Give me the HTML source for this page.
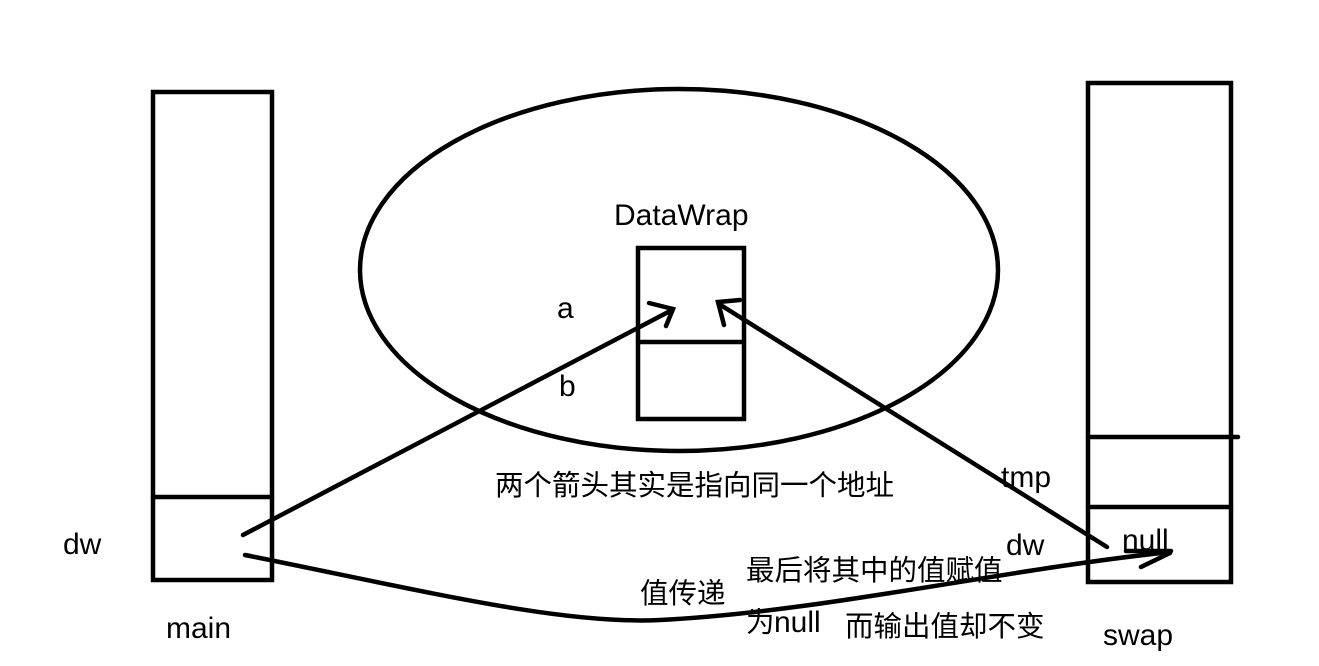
<!DOCTYPE html>
<html><head><meta charset="utf-8"><style>
html,body{margin:0;padding:0;background:#fff;width:1319px;height:666px;overflow:hidden}
svg{display:block}
text{font-family:"Liberation Sans","Noto Sans CJK SC",sans-serif;font-size:30px;fill:#000}
text.c{font-size:28.5px}
</style></head><body>
<svg width="1319" height="666" viewBox="0 0 1319 666">
<g fill="none" stroke="#000" stroke-width="4.5" stroke-linecap="round">
<rect x="153" y="92" width="119" height="488"/>
<line x1="153" y1="497" x2="272" y2="497"/>
<rect x="1088" y="83" width="143" height="499"/>
<line x1="1088" y1="437" x2="1238" y2="437"/>
<line x1="1088" y1="507" x2="1231" y2="507"/>
<ellipse cx="679" cy="270" rx="319" ry="181"/>
<rect x="638" y="248" width="106" height="171"/>
<line x1="638" y1="342" x2="744" y2="342"/>
<line x1="243" y1="535" x2="672" y2="310"/>
<polyline points="649,303 673,309 666,326"/>
<line x1="1107" y1="547" x2="719" y2="304"/>
<polyline points="740,300 718,302 724,325"/>
<path d="M245,555 C420,590 560,625 660,620 C820,612 1000,570 1170,552"/>
<line x1="1126" y1="551" x2="1171" y2="551"/>
<line x1="1141" y1="567" x2="1170" y2="553"/>
</g>
<text x="614" y="225">DataWrap</text>
<text x="557" y="318">a</text>
<text x="559" y="396">b</text>
<text class="c" x="495" y="495">两个箭头其实是指向同一个地址</text>
<text x="63" y="554">dw</text>
<text x="166" y="638">main</text>
<text x="1001" y="487">tmp</text>
<text x="1006" y="555">dw</text>
<text x="1122" y="550">null</text>
<text x="1103" y="645">swap</text>
<text class="c" x="640" y="603">值传递</text>
<text class="c" x="746" y="580">最后将其中的值赋值</text>
<text class="c" x="746" y="632">为</text>
<text x="774" y="632">null</text>
<text class="c" x="845" y="636">而输出值却不变</text>
</svg>
</body></html>
